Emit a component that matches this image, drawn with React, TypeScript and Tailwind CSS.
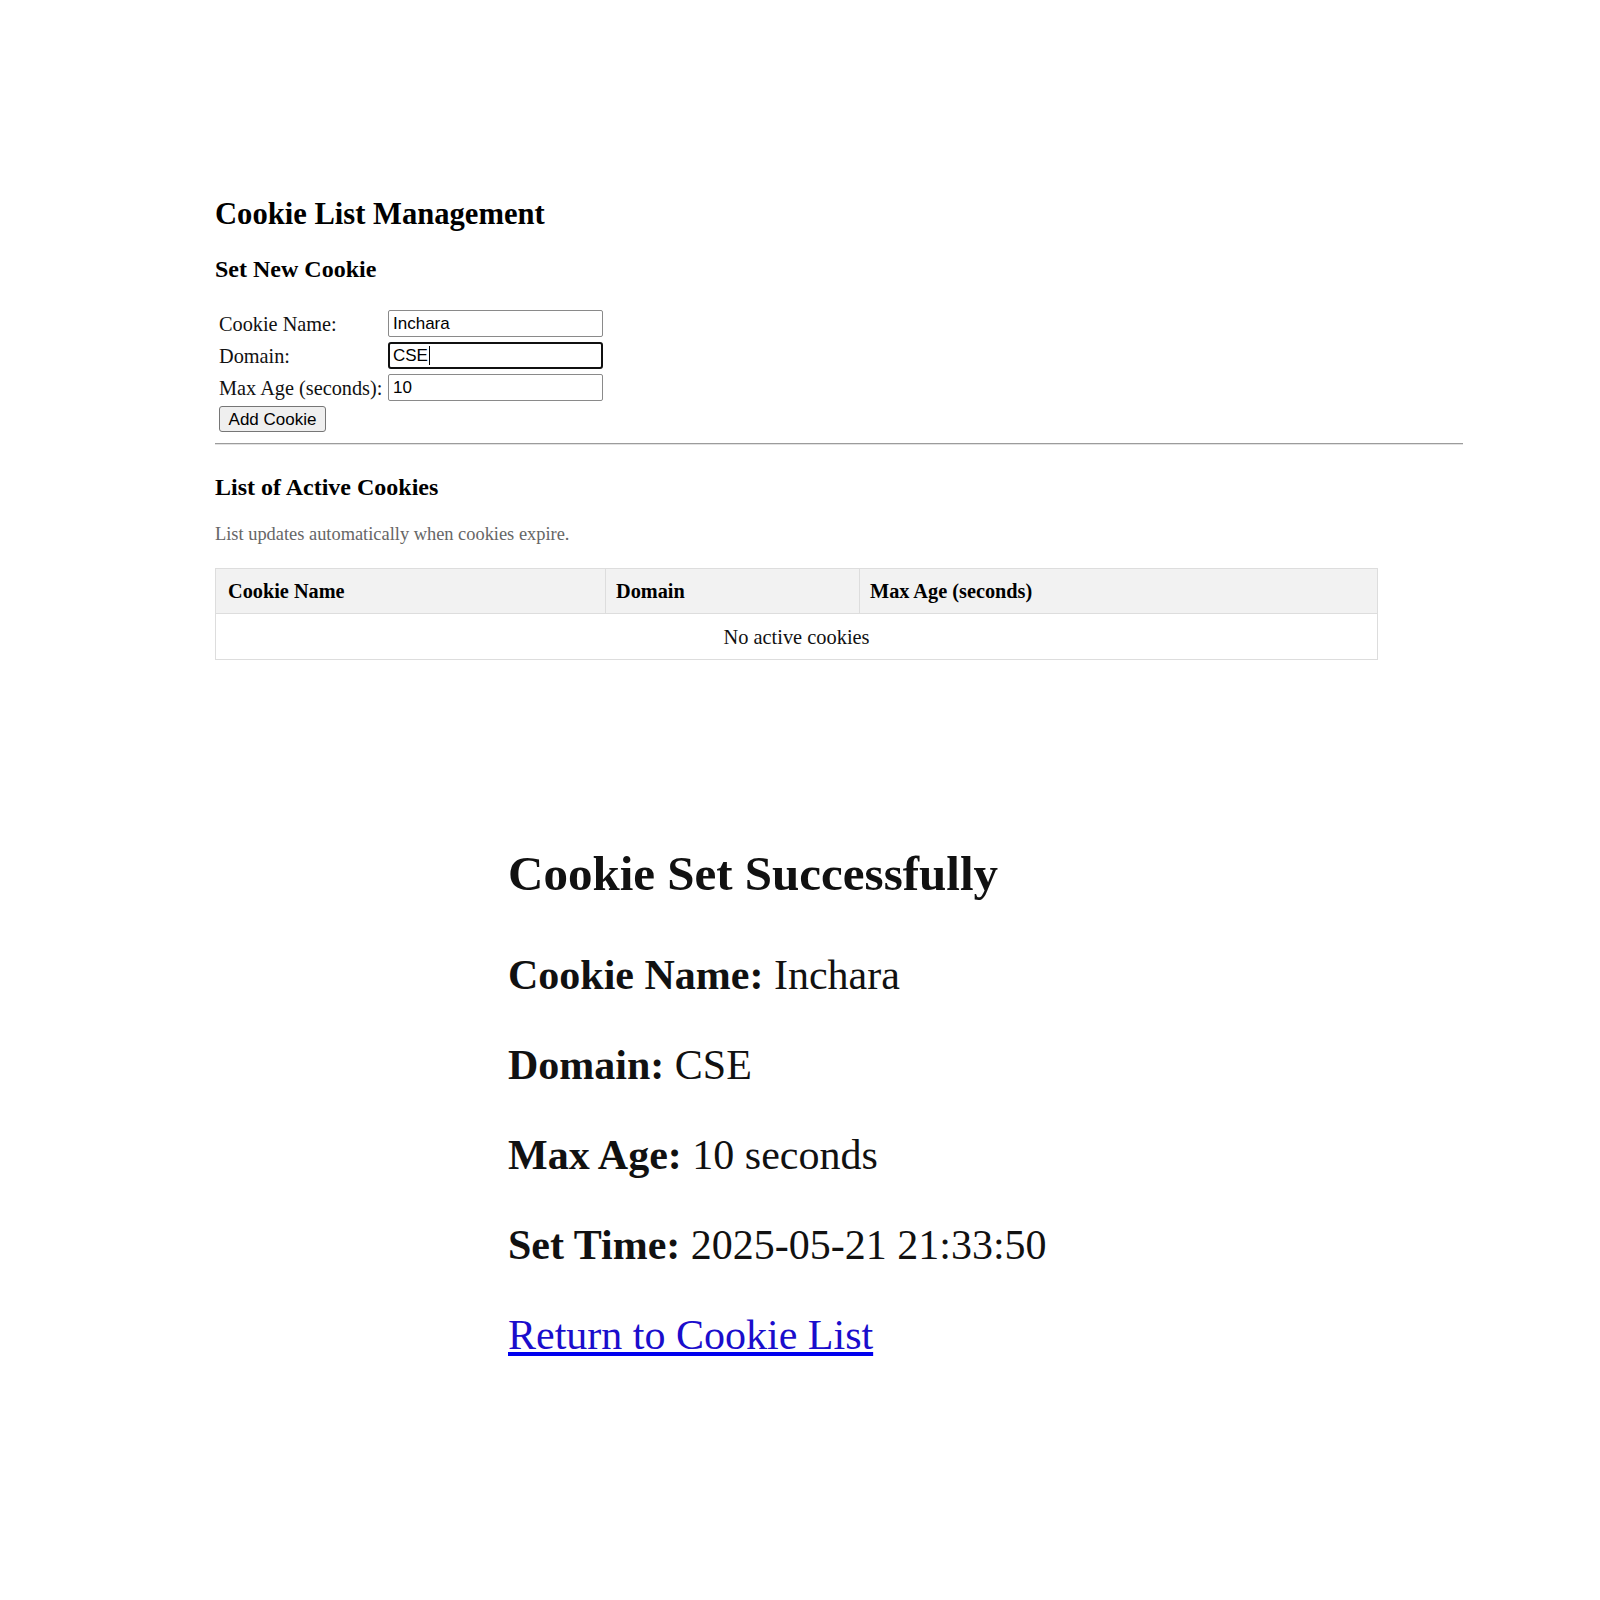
import React from 'react';

const serif = "font-['Liberation_Serif','Times_New_Roman',serif]";
const sans = "font-['Liberation_Sans',Arial,sans-serif]";

const FieldBox: React.FC<{ value: string; focused?: boolean }> = ({ value, focused }) => (
    <div
        className={
            focused
                ? `w-[215px] h-[27px] border-2 border-[#101010] rounded-[3px] px-[3px] flex items-center text-[17px] text-black ${sans}`
                : `w-[215px] h-[27px] border border-[#8a8a8a] rounded-[2px] px-[4px] flex items-center text-[17px] text-black ${sans}`
        }
    >
        <span>{value}</span>
        {focused && <span className="w-px h-[19px] bg-black ml-px"></span>}
    </div>
);

const FormRow: React.FC<{ label: string; value: string; focused?: boolean }> = ({ label, value, focused }) => (
    <div className="flex items-center h-[27px]">
        <div className="w-[169px] text-[20.3px] leading-[27px] pt-[2px] text-[#111] whitespace-nowrap">{label}</div>
        <FieldBox value={value} focused={focused} />
    </div>
);

const Detail: React.FC<{ label: string; value: string }> = ({ label, value }) => (
    <div className="h-[90px] text-[42px] leading-[90px] text-[#111] whitespace-nowrap">
        <span className="font-bold">{label}</span> {value}
    </div>
);

const App: React.FC = () => {
    return (
        <div className={`min-h-[1600px] bg-white text-black ${serif}`}>
            {/* Cookie list page */}
            <div className="pl-[215px] pt-[196px]">
                <h2 className="text-[30.6px] leading-[36px] font-bold">Cookie List Management</h2>
                <h3 className="mt-[23px] text-[24px] leading-[28px] font-bold">Set New Cookie</h3>

                <div className="mt-[27px] pl-[4px] flex flex-col gap-[5px]">
                    <FormRow label="Cookie Name:" value="Inchara" />
                    <FormRow label="Domain:" value="CSE" focused />
                    <FormRow label="Max Age (seconds):" value="10" />
                    <div>
                        <button
                            className={`w-[107px] h-[26px] bg-[#efefef] border border-[#767676] rounded-[3px] text-[17px] leading-none text-black ${sans}`}
                        >
                            Add Cookie
                        </button>
                    </div>
                </div>

                <div className="mt-[11px] w-[1248px] border-t border-[#9c9c9c] border-b border-b-[#e2e2e2]"></div>

                <h3 className="mt-[28px] text-[24px] leading-[28px] font-bold">List of Active Cookies</h3>
                <p className="mt-[22px] text-[18.4px] leading-[22px] text-[#666]">
                    List updates automatically when cookies expire.
                </p>

                <div className="mt-[23px] w-[1163px] border border-[#dddddd]">
                    <div className="grid grid-cols-[390px_254px_1fr] h-[45px] bg-[#f2f2f2] border-b border-[#dddddd] text-[20.3px] leading-[44px] font-bold">
                        <div className="pl-[12px] border-r border-[#dddddd]">Cookie Name</div>
                        <div className="pl-[10px] border-r border-[#dddddd]">Domain</div>
                        <div className="pl-[10px]">Max Age (seconds)</div>
                    </div>
                    <div className="h-[45px] text-center text-[20.4px] leading-[46px] text-[#111]">No active cookies</div>
                </div>
            </div>

            {/* Confirmation page */}
            <div className="pl-[508px] mt-[169px]">
                <h1 className="h-[90px] text-[49px] leading-[90px] font-bold text-[#111]">Cookie Set Successfully</h1>
                <div className="mt-[11px]">
                    <Detail label="Cookie Name:" value="Inchara" />
                    <Detail label="Domain:" value="CSE" />
                    <Detail label="Max Age:" value="10 seconds" />
                    <Detail label="Set Time:" value="2025-05-21 21:33:50" />
                    <div className="h-[90px] text-[42px] leading-[90px]">
                        <a href="#" className="text-[#1a0dcc] underline decoration-[#0000ee]">
                            Return to Cookie List
                        </a>
                    </div>
                </div>
            </div>
        </div>
    );
};

export default App;
